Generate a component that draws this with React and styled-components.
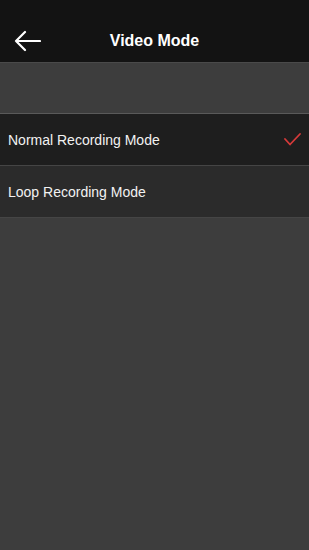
import React from 'react';
import styled, { createGlobalStyle } from 'styled-components';

const GlobalStyle = createGlobalStyle`
    html, body {
        margin: 0;
        padding: 0;
        background: #3d3d3d;
        font-family: "Helvetica Neue", "Liberation Sans", Arial, sans-serif;
    }
`;

const Page = styled.div`
    width: 309px;
    min-height: 550px;
    background: #3d3d3d;
    display: flex;
    flex-direction: column;
`;

// top 20px is the status bar area, the bar itself is 42px
const Header = styled.div`
    height: 42px;
    padding-top: 20px;
    background: #131313;
    border-bottom: 1px solid #4a4a4a;
    display: flex;
    align-items: center;
    position: relative;
`;

const BackBtn = styled.button`
    background: none;
    border: none;
    padding: 0;
    margin-left: 14px;
    width: 28px;
    height: 24px;
    display: flex;
    align-items: center;
    cursor: pointer;
`;

const Title = styled.div`
    position: absolute;
    left: 0;
    right: 0;
    text-align: center;
    color: #fff;
    font-size: 16px;
    font-weight: bold;
    pointer-events: none;
`;

const Spacer = styled.div`
    height: 50px;
    border-bottom: 1px solid #5a5a5a;
`;

const Row = styled.div`
    height: 51px;
    background: ${p => p.bg};
    border-bottom: 1px solid #454545;
    display: flex;
    align-items: center;
    justify-content: space-between;
    padding: 0 8px;
    color: #f2f2f2;
    font-size: 14px;
`;

const modes = [
    { label: 'Normal Recording Mode', bg: '#1e1e1e', selected: true },
    { label: 'Loop Recording Mode', bg: '#2b2b2b', selected: false },
];

const App = () => {
    return (
        <>
            <GlobalStyle />
            <Page>
                <Header>
                    <BackBtn>
                        <svg width="27" height="22" viewBox="0 0 27 22" fill="none" stroke="#fff" strokeWidth="2.2" strokeLinecap="round" strokeLinejoin="round">
                            <path d="M26 11H2M11 2L2 11l9 9" />
                        </svg>
                    </BackBtn>
                    <Title>Video Mode</Title>
                </Header>
                <Spacer />
                {modes.map(m => (
                    <Row key={m.label} bg={m.bg}>
                        <span>{m.label}</span>
                        {m.selected && (
                            <svg width="17" height="13" viewBox="0 0 17 13" fill="none" stroke="#d63a3a" strokeWidth="1.8" strokeLinecap="round" strokeLinejoin="round">
                                <path d="M1 6l5 5.5L16 1" />
                            </svg>
                        )}
                    </Row>
                ))}
            </Page>
        </>
    );
};

export default App;
